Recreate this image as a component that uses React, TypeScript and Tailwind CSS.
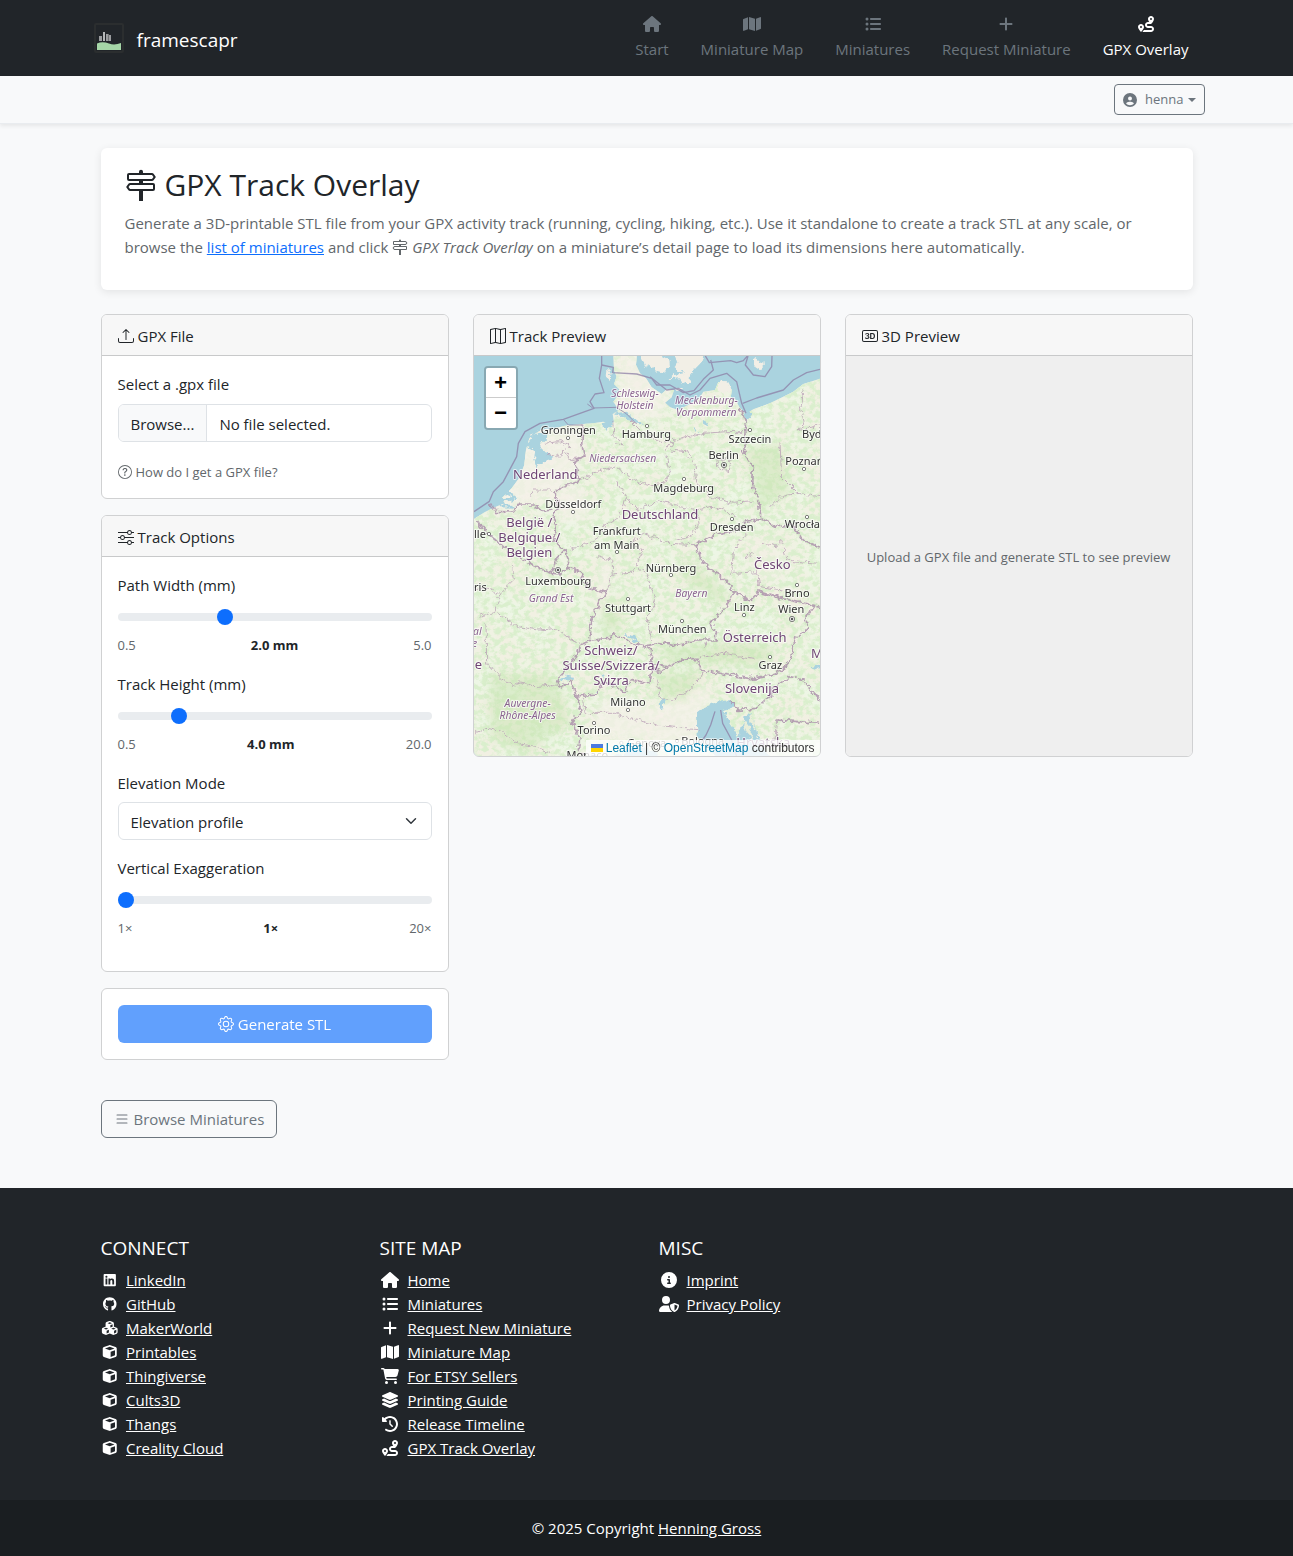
import { useState } from "react";
import type { ReactNode } from "react";
import type { IconType } from "react-icons";
import {
  BsBadge3D,
  BsGear,
  BsList,
  BsMap,
  BsQuestionCircle,
  BsSignpost2,
  BsSliders,
  BsUpload,
} from "react-icons/bs";
import {
  FaCartShopping,
  FaCircleInfo,
  FaCircleUser,
  FaClockRotateLeft,
  FaCube,
  FaCubes,
  FaGithub,
  FaHouse,
  FaLayerGroup,
  FaLinkedin,
  FaListUl,
  FaMap,
  FaPlus,
  FaRoute,
  FaUserShield,
} from "react-icons/fa6";

type LinkItem = { icon: IconType; label: string };

const navItems: LinkItem[] = [
  { icon: FaHouse, label: "Start" },
  { icon: FaMap, label: "Miniature Map" },
  { icon: FaListUl, label: "Miniatures" },
  { icon: FaPlus, label: "Request Miniature" },
  { icon: FaRoute, label: "GPX Overlay" },
];

const connectLinks: LinkItem[] = [
  { icon: FaLinkedin, label: "LinkedIn" },
  { icon: FaGithub, label: "GitHub" },
  { icon: FaCubes, label: "MakerWorld" },
  { icon: FaCube, label: "Printables" },
  { icon: FaCube, label: "Thingiverse" },
  { icon: FaCube, label: "Cults3D" },
  { icon: FaCube, label: "Thangs" },
  { icon: FaCube, label: "Creality Cloud" },
];

const siteLinks: LinkItem[] = [
  { icon: FaHouse, label: "Home" },
  { icon: FaListUl, label: "Miniatures" },
  { icon: FaPlus, label: "Request New Miniature" },
  { icon: FaMap, label: "Miniature Map" },
  { icon: FaCartShopping, label: "For ETSY Sellers" },
  { icon: FaLayerGroup, label: "Printing Guide" },
  { icon: FaClockRotateLeft, label: "Release Timeline" },
  { icon: FaRoute, label: "GPX Track Overlay" },
];

const miscLinks: LinkItem[] = [
  { icon: FaCircleInfo, label: "Imprint" },
  { icon: FaUserShield, label: "Privacy Policy" },
];

function Logo() {
  return (
    <svg viewBox="0 0 30 30" className="size-[30px]" aria-hidden="true">
      <rect x="1" y="1" width="28" height="28" rx="1" fill="#212529" stroke="#2b2e2f" strokeWidth="2" />
      <g fill="#9a9c9e">
        <rect x="5" y="13" width="3" height="5" />
        <rect x="9" y="9" width="2" height="9" fill="#b5b7b8" />
        <rect x="12" y="11" width="2" height="7" />
        <rect x="14" y="11" width="1" height="7" fill="#6d7072" />
        <rect x="15" y="12" width="2" height="6" />
      </g>
      <path d="M3 20.500C7 18.500 11 19 15 20.500s8 1 12-.5V27H3z" fill="#a5d6a7" />
    </svg>
  );
}

function Card({ icon: Icon, title, children }: { icon: IconType; title: string; children: ReactNode }) {
  return (
    <section className="overflow-hidden rounded-md border border-[#d0d1d2] bg-white">
      <h2 className="flex items-center gap-1 border-b border-[#c8c9ca] bg-[#f7f7f7] px-4 pt-[9px] pb-[7px] leading-6">
        <Icon className="size-4" />
        {title}
      </h2>
      {children}
    </section>
  );
}

type SliderProps = {
  id: string;
  label: string;
  min: number;
  max: number;
  step: number;
  initial: number;
  format: (v: number) => string;
  unit?: string;
};

function Slider({ id, label, min, max, step, initial, format, unit = "" }: SliderProps) {
  const [value, setValue] = useState(initial);
  return (
    <div className="mb-4">
      <label htmlFor={id} className="mb-2 block leading-6">
        {label}
      </label>
      <input
        id={id}
        type="range"
        min={min}
        max={max}
        step={step}
        value={value}
        onChange={(e) => setValue(Number(e.target.value))}
        className="block h-6 w-full appearance-none bg-transparent [&::-webkit-slider-runnable-track]:h-2 [&::-webkit-slider-runnable-track]:rounded-full [&::-webkit-slider-runnable-track]:bg-[#e9ecef] [&::-webkit-slider-thumb]:-mt-1 [&::-webkit-slider-thumb]:size-4 [&::-webkit-slider-thumb]:appearance-none [&::-webkit-slider-thumb]:rounded-full [&::-webkit-slider-thumb]:bg-[#0d6efd]"
      />
      <div className="mt-1.5 flex justify-between text-[13px] leading-[21px] text-[#62676b]">
        <span>{format(min)}</span>
        <output htmlFor={id} className="font-bold text-[#212529]">
          {format(value)}
          {unit}
        </output>
        <span>{format(max)}</span>
      </div>
    </div>
  );
}

type Place = { t: string; x: number; y: number; dot?: [number, number]; capital?: boolean };

const cities: Place[] = [
  { t: "Groningen", x: 295, y: 372, dot: [294, 384] },
  { t: "Hamburg", x: 529, y: 385, dot: [531, 348] },
  { t: "Szczecin", x: 840, y: 398, dot: [840, 360] },
  { t: "Berlin", x: 761, y: 446, dot: [762, 465], capital: true },
  { t: "Magdeburg", x: 641, y: 545, dot: [642, 507] },
  { t: "Düsseldorf", x: 310, y: 594, dot: [309, 606] },
  { t: "Dresden", x: 785, y: 663, dot: [786, 627] },
  { t: "Frankfurt", x: 440, y: 674 },
  { t: "am Main", x: 440, y: 716, dot: [441, 726] },
  { t: "Nürnberg", x: 603, y: 785, dot: [603, 795] },
  { t: "Luxembourg", x: 265, y: 824, dot: [264, 780], capital: true },
  { t: "Stuttgart", x: 474, y: 905, dot: [474, 867] },
  { t: "München", x: 637, y: 970, dot: [636, 933] },
  { t: "Linz", x: 823, y: 904, dot: [822, 915] },
  { t: "Brno", x: 981, y: 860, dot: [981, 825] },
  { t: "Wien", x: 964, y: 908, dot: [966, 927], capital: true },
  { t: "Graz", x: 901, y: 1078, dot: [900, 1041] },
  { t: "Milano", x: 474, y: 1188, dot: [474, 1200] },
  { t: "Torino", x: 372, y: 1273, dot: [372, 1239] },
  { t: "Genova", x: 530, y: 1312, dot: [454, 1299] },
  { t: "Bologna", x: 698, y: 1304, dot: [621, 1293] },
  { t: "Monaco", x: 352, y: 1348 },
];

const edgeCities = [
  { t: "Byd", x: 996, y: 384 },
  { t: "Poznań", x: 946, y: 465 },
  { t: "Wrocław", x: 944, y: 655 },
  { t: "lle", x: 12, y: 683 },
  { t: "ris", x: 12, y: 842 },
];

const countries: Place[] = [
  { t: "Nederland", x: 226, y: 508 },
  { t: "Deutschland", x: 570, y: 626 },
  { t: "België /", x: 178, y: 652 },
  { t: "Belgique /", x: 178, y: 697 },
  { t: "Belgien", x: 178, y: 742 },
  { t: "Česko", x: 907, y: 777 },
  { t: "Österreich", x: 854, y: 995 },
  { t: "Schweiz/", x: 423, y: 1036 },
  { t: "Suisse/Svizzera/", x: 423, y: 1080 },
  { t: "Svizra", x: 423, y: 1126 },
  { t: "Slovenija", x: 846, y: 1150 },
  { t: "Hrvatska", x: 880, y: 1312 },
  { t: "Ma", x: 1052, y: 1045 },
  { t: "e", x: 25, y: 1078 },
];

const regions: Place[] = [
  { t: "Schleswig-", x: 495, y: 261 },
  { t: "Holstein", x: 495, y: 297 },
  { t: "Mecklenburg-", x: 709, y: 283 },
  { t: "Vorpommern", x: 709, y: 319 },
  { t: "Niedersachsen", x: 458, y: 457 },
  { t: "Grand Est", x: 243, y: 875 },
  { t: "Bayern", x: 664, y: 861 },
  { t: "Auvergne-", x: 173, y: 1192 },
  { t: "Rhône-Alpes", x: 173, y: 1227 },
  { t: "al", x: 22, y: 975 },
  { t: "e", x: 14, y: 1010 },
];

function TrackMap() {
  return (
    <svg
      viewBox="12 138 1038 1200"
      preserveAspectRatio="xMidYMid slice"
      className="block size-full"
      role="img"
      aria-label="Map of Central Europe"
    >
      <defs>
        <filter id="forest" x="0" y="0" width="100%" height="100%">
          <feTurbulence type="fractalNoise" baseFrequency="0.055 0.065" numOctaves="5" seed="8" />
          <feColorMatrix values="0 0 0 0 0.7  0 0 0 0 0.86  0 0 0 0 0.61  4.2 0 0 0 -1.7" />
        </filter>
        <filter id="fields" x="0" y="0" width="100%" height="100%">
          <feTurbulence type="fractalNoise" baseFrequency="0.012" numOctaves="3" seed="21" />
          <feColorMatrix values="0 0 0 0 0.85  0 0 0 0 0.92  0 0 0 0 0.78  0 3 0 0 -1.1" />
        </filter>
        <filter id="jagged" x="-5%" y="-5%" width="110%" height="110%">
          <feTurbulence type="fractalNoise" baseFrequency="0.06" numOctaves="3" seed="4" />
          <feDisplacementMap in="SourceGraphic" scale="22" xChannelSelector="R" yChannelSelector="G" />
        </filter>
        <filter id="haze" x="-20%" y="-20%" width="140%" height="140%">
          <feGaussianBlur stdDeviation="14" />
        </filter>
        <clipPath id="land">
          <path d="M430 138L432 180 440 200 432 222 448 238 440 262 430 275 446 300 428 312 432 335 418 345 400 335 370 340 330 343 285 347 235 360 200 368 178 385 168 420 163 465 148 503 125 535 95 565 105 580 78 590 45 606 12 627V1345H1060V203L1000 222 970 245 900 280 850 298 828 312 808 292 796 268 782 262 786 240 770 218 745 216 735 240 700 245 690 262 660 282 625 300 600 292 585 278 605 262 612 240 590 238 575 252 545 232 528 205 510 190 498 165 500 138Z" />
        </clipPath>
      </defs>

      <rect x="0" y="130" width="1060" height="1220" fill="#aad3df" />

      <g clipPath="url(#land)">
        <rect x="0" y="130" width="1060" height="1220" fill="#f1f0e2" />
        <rect x="0" y="130" width="1060" height="1220" filter="url(#fields)" />
        <rect x="0" y="130" width="1060" height="1220" filter="url(#forest)" />
        <g fill="#f5f1e9" opacity="0.75" filter="url(#haze)">
          <path d="M440 130H520L600 250 560 330 450 320Z" />
          <path d="M160 370L340 345 335 470 260 550 130 600 60 600Z" />
          <path d="M240 560L330 520 360 620 280 640Z" />
          <path d="M400 1160L560 1190 730 1120 700 1230 690 1340 520 1290 340 1280Z" />
          <path d="M400 740L430 760 400 900 370 980 380 860Z" />
          <path d="M830 680L960 700 930 830 830 790Z" opacity="0.5" />
        </g>
        <g fill="#c5e2ad" opacity="0.45" filter="url(#haze)">
          <path d="M830 420L930 400 960 540 870 600Z" />
          <path d="M400 870L460 880 440 970 390 960Z" />
          <path d="M560 1010L900 1000 900 1060 600 1060Z" />
          <path d="M60 1090L260 1100 300 1240 160 1330 60 1280Z" />
          <path d="M640 740L780 860 740 880 640 800Z" />
          <path d="M560 1090L700 1090 640 1170 570 1160Z" />
        </g>
      </g>

      <g fill="#f2efe6" filter="url(#jagged)">
        <path d="M504 130L560 130 598 150 600 172 585 190 560 182 520 160Z" />
        <path d="M612 130L692 130 700 150 680 172 664 190 662 212 640 226 630 205 598 208 610 196 640 190 614 172 622 158Z" />
        <path d="M852 146L880 156 882 170 870 178 852 166Z" />
        <path d="M750 212L772 214 784 236 776 252 752 246 740 232Z" />
        <path d="M620 232L640 236 634 244 618 242Z" />
        <path d="M412 180l10 4-4 30-8-6zM180 380l14-8 6 6-14 10zM205 362l30-8 4 5-30 9z" />
      </g>

      <g fill="#aad3df" filter="url(#jagged)">
        <path d="M170 398L190 375 225 364 232 378 214 396 215 425 240 432 250 445 225 452 200 472 192 448 196 425 180 418Z" />
        <path d="M398 338L428 330 424 348 412 362 398 350Z" />
        <path d="M428 312L470 308 500 330 520 345 494 338 466 320Z" />
        <path d="M545 168L560 176 552 205 540 190Z" />
        <path d="M820 304L846 310 840 328 826 332Z" />
        <path d="M700 330l14 6-4 10-12-8zM676 354l8 10-6 4z" />
        <path d="M78 566L135 560 132 570 90 578ZM85 582L130 585 134 593 95 592ZM110 540l34 22-4 4-34-18z" />
        <path d="M684 1285L678 1212 700 1195 738 1176 782 1170 792 1192 762 1202 778 1240 800 1275 812 1262 822 1220 840 1210 858 1250 870 1290 900 1345 740 1345 700 1290Z" />
        <path d="M270 1112L290 1098 312 1100 310 1108 288 1108Z" />
        <path d="M462 966L500 985 510 998 488 992ZM566 1182L580 1160 584 1172 574 1200ZM388 1092L404 1090 400 1102ZM378 1145L390 1138 384 1154Z" />
        <path d="M1024 1072L1050 1064 1050 1072 1030 1080ZM300 1345L420 1345 520 1305 580 1345Z" />
      </g>
      <g fill="#e9eed9" filter="url(#jagged)">
        <path d="M818 1235l14 4 18 46-8 4zM838 1215l8 6 14 40-8-4z" />
      </g>

      <g fill="none" stroke="#8d7fa6" strokeWidth="4" strokeLinejoin="round" opacity="0.75">
        <path d="M12 605L58 574 70 545 100 515 140 440 145 400 165 365 210 340 280 328 330 310 372 295 360 275 375 252 402 248 388 205 395 165V138" />
        <path d="M395 165L430 172 428 188 500 192 545 205 560 225 600 225 640 248 672 242 700 208 730 180 722 150" />
        <path d="M540 200L590 240 625 235 660 255 690 240 720 205 770 190 800 215 815 280 828 310" />
        <path d="M706 138L718 158 782 152 800 158 820 152 832 138M834 138L826 165 850 195 885 200 905 170 906 138" />
        <path d="M818 280L860 264 940 240 970 210 1010 188 1050 178" />
        <path d="M352 282L368 294 440 292 470 312 500 342M280 328L295 345 340 345" strokeWidth="3" />
        <path d="M735 1204L722 1245 708 1275 690 1300M752 1200L758 1240 785 1290 800 1340" />
      </g>

      <g fill="none" stroke="#a98da9" strokeWidth="5" strokeLinejoin="round" opacity="0.8" filter="url(#jagged)">
        <path d="M340 346L335 400 342 440 308 455 328 485 322 515 270 535 255 550 268 590 248 620 262 645 250 690 285 722 262 745 245 790 220 780 190 765 150 742 110 720 80 690 40 658 20 630" />
        <path d="M60 578L76 604 130 606 150 582 192 582 215 604 245 600" />
        <path d="M285 722L295 765 275 792 245 790M290 772L330 785 350 832 408 846 388 875 366 925 360 985" />
        <path d="M262 1130L272 1095 318 1042 330 1005 365 990 420 985 432 970 490 1002 540 1010 546 1055 590 1072 570 1085 545 1078 540 1122 480 1108 462 1150 430 1125 400 1118 380 1152 318 1158 305 1110 262 1130" />
        <path d="M318 1158L335 1200 305 1238 330 1282 325 1320 350 1345M540 1010L580 998 625 1006 680 990 735 990 740 965 720 940 768 888 795 845" />
        <path d="M590 1070L640 1048 682 1045 692 1080 760 1092 840 1106 900 1095 940 1080 960 1050 975 985 1012 960 1008 920 1030 890" />
        <path d="M808 292L825 330 830 400 818 430 850 470 848 530 870 590 872 625 825 635 812 660 740 672 678 704 692 745 725 780 760 805 795 845 840 872 868 845 935 865 965 872 1050 890" />
        <path d="M872 625L920 650 965 645 1000 690 1050 712M780 1172L800 1198 860 1195 900 1160 915 1130 960 1100 1000 1110 1050 1170M920 1230L985 1235 1050 1240" />
      </g>
      <g fill="none" stroke="#b79db4" strokeWidth="3" strokeLinejoin="round" opacity="0.75" filter="url(#jagged)">
        <path d="M428 330L432 380 460 405 430 400M480 330L520 370 560 390 610 395 650 380 700 370 770 365 822 365M610 395L585 430 600 480 580 520 540 525 480 505 440 470 400 480 350 500 322 515" />
        <path d="M600 420L650 425 675 460 680 520 720 560 790 580 850 575M440 520L470 560 500 600 560 575 620 585 680 600 740 590M470 560L450 620 400 650 380 690 300 720" />
        <path d="M380 740L425 750 430 795 480 790 500 765 530 790 545 840 560 880 530 920 545 990M430 795L408 846M500 765L520 720 480 700 520 670 600 700 678 704" />
        <path d="M680 600L690 640 660 680 620 690M740 590L800 620M125 770L130 810 90 850 75 905 30 915M80 905L140 950 210 960 260 955 300 985 330 1000M48 935L50 1060 90 1100 130 1130 150 1115 190 1130 240 1125 262 1130" />
        <path d="M12 1270L50 1255 100 1265 140 1300 200 1310 240 1330M430 1210L500 1230 560 1245 640 1255 690 1260M560 1110L570 1160 600 1175 660 1140 700 1090M340 1155L345 1210 430 1210M12 835L55 835 85 850" />
        <path d="M785 800L790 720 830 670M790 790L860 785 870 830 935 840M830 735L850 725 845 740 825 742ZM870 700L920 710 940 690M940 715L950 750 1040 760M680 1045L760 1030 850 1045M700 1010L720 980" />
        <path d="M1000 235L990 290 1005 345 980 360 1050 345M930 400L935 500 985 550 1050 560M905 590L935 560 985 550M920 1230L915 1290 960 1320M740 446L780 448 775 480 745 478ZM185 560L190 540 250 540M220 400L270 395 300 410 260 440 230 432M280 420L300 450 340 440" />
      </g>

      <g
        fontFamily='"Noto Sans", "Open Sans", sans-serif'
        stroke="#ffffff"
        strokeOpacity="0.65"
        strokeWidth="6"
        strokeLinejoin="round"
        paintOrder="stroke"
        textAnchor="middle"
      >
        <g fontSize="31" fontStyle="italic" fill="#8a6390">
          {regions.map((p) => (
            <text key={p.t + p.y} x={p.x} y={p.y}>
              {p.t}
            </text>
          ))}
        </g>
        <g fontSize="39" fill="#6f4574">
          {countries.map((p) => (
            <text key={p.t + p.y} x={p.x} y={p.y}>
              {p.t}
            </text>
          ))}
        </g>
        <g fontSize="33" fill="#333333">
          {cities.map((p) => (
            <text key={p.t} x={p.x} y={p.y}>
              {p.t}
            </text>
          ))}
          {edgeCities.map((p) => (
            <text key={p.t} x={p.x} y={p.y} textAnchor="start">
              {p.t}
            </text>
          ))}
        </g>
      </g>
      <g fill="#ffffff" stroke="#444444" strokeWidth="2">
        {cities.map((p) => p.dot && <circle key={p.t} cx={p.dot[0]} cy={p.dot[1]} r={p.capital ? 8 : 5} />)}
        {cities.map((p) => p.dot && p.capital && <circle key={p.t} cx={p.dot[0]} cy={p.dot[1]} r="3" fill="#444444" />)}
        <circle cx="57" cy="672" r="5" />
        <circle cx="1002" cy="477" r="5" />
        <circle cx="1011" cy="621" r="5" />
      </g>
    </svg>
  );
}

function LinkList({ title, items, small = false }: { title: string; items: LinkItem[]; small?: boolean }) {
  return (
    <nav aria-label={title}>
      <h2 className="mb-2 text-[19px] leading-6">{title}</h2>
      <ul>
        {items.map(({ icon: Icon, label }) => (
          <li key={label} className="flex items-center gap-2 leading-6">
            <span className={small ? "text-sm" : "text-base"}>
              <Icon className="h-[1em] w-[1.25em]" />
            </span>
            <a href="#" className="underline">
              {label}
            </a>
          </li>
        ))}
      </ul>
    </nav>
  );
}

export default function App() {
  return (
    <div className='min-h-screen bg-[#f8f9fa] font-["Segoe_UI","Open_Sans",sans-serif] text-[15px] leading-6 text-[#212529]'>
      <header className="bg-[#212529]">
        <div className="mx-auto flex max-w-[1140px] items-center justify-between px-3">
          <a href="#" className="flex items-center gap-[13px] pl-[5px] text-[19px] text-white">
            <Logo />
            <span className="pt-1">framescapr</span>
          </a>
          <nav aria-label="Main" className="flex">
            {navItems.map(({ icon: Icon, label }) => (
              <a
                key={label}
                href="#"
                className={
                  label === "GPX Overlay"
                    ? "flex flex-col items-center gap-px px-4 pt-3 pb-[15px] text-white"
                    : "flex flex-col items-center gap-px px-4 pt-3 pb-[15px] text-[#6c757d]"
                }
              >
                <span className="flex h-6 items-center text-base">
                  <Icon className="h-[1em] w-[1.25em]" />
                </span>
                {label}
              </a>
            ))}
          </nav>
        </div>
      </header>

      <div className="border-b border-[#e9ecef] shadow-[0_2px_4px_rgba(0,0,0,0.075)]">
        <div className="mx-auto flex max-w-[1140px] justify-end px-3 py-2">
          <button
            type="button"
            className="flex items-center rounded-sm border border-[#6c757d] px-2 py-1 text-[13px] leading-[21px] text-[#6c757d]"
          >
            <FaCircleUser className="mr-2 size-3.5" />
            henna
            <span className="ml-1 border-x-4 border-t-4 border-x-transparent border-t-[#6c757d]" />
          </button>
        </div>
      </div>

      <main className="mx-auto max-w-[1140px] px-6 pt-6 pb-[50px]">
        <section className="mb-6 rounded-md bg-white px-6 py-4 shadow-[0_2px_8px_rgba(0,0,0,0.09)]">
          <h1 className="mb-[5px] flex items-center gap-2 text-[30px] leading-[42px]">
            <BsSignpost2 className="size-8" />
            GPX Track Overlay
          </h1>
          <p className="mb-[15px] text-[#62676b]">
            Generate a 3D-printable STL file from your GPX activity track (running, cycling, hiking, etc.). Use it
            standalone to create a track STL at any scale, or browse the{" "}
            <a href="#" className="text-[#0d6efd] underline">
              list of miniatures
            </a>{" "}
            and click <BsSignpost2 className="inline size-4 align-[-2px]" /> <em>GPX Track Overlay</em> on a
            miniature’s detail page to load its dimensions here automatically.
          </p>
        </section>

        <div className="grid grid-cols-3 items-start gap-6">
          <div className="flex flex-col gap-4">
            <Card icon={BsUpload} title="GPX File">
              <div className="p-4">
                <label htmlFor="gpx" className="mb-2 block">
                  Select a .gpx file
                </label>
                <label
                  htmlFor="gpx"
                  className="mb-4 flex h-[38px] items-stretch overflow-hidden rounded-md border border-[#dee2e6]"
                >
                  <input id="gpx" type="file" accept=".gpx" className="sr-only" />
                  <span className="border-r border-[#dee2e6] bg-[#f8f9fa] px-3 pt-[7px]">Browse...</span>
                  <span className="px-3 pt-[7px]">No file selected.</span>
                </label>
                <a href="#" className="flex h-6 items-center gap-1 pt-1 text-[13px] text-[#62676b]">
                  <BsQuestionCircle className="size-3.5" />
                  How do I get a GPX file?
                </a>
              </div>
            </Card>

            <Card icon={BsSliders} title="Track Options">
              <div className="p-4">
                <Slider
                  id="width"
                  label="Path Width (mm)"
                  min={0.5}
                  max={5}
                  step={0.1}
                  initial={2}
                  format={(v) => v.toFixed(1)}
                  unit=" mm"
                />
                <Slider
                  id="height"
                  label="Track Height (mm)"
                  min={0.5}
                  max={20}
                  step={0.5}
                  initial={4}
                  format={(v) => v.toFixed(1)}
                  unit=" mm"
                />
                <label htmlFor="mode" className="mb-[7px] block">
                  Elevation Mode
                </label>
                <div className="relative mb-4">
                  <select
                    id="mode"
                    className="block h-[38px] w-full appearance-none rounded-md border border-[#dee2e6] bg-white px-3 pt-0.5"
                  >
                    <option>Elevation profile</option>
                    <option>Flat</option>
                  </select>
                  <svg
                    viewBox="0 0 16 16"
                    className="pointer-events-none absolute top-1/2 right-[13px] h-3 w-4 -translate-y-1/2"
                    aria-hidden="true"
                  >
                    <path
                      d="m2 5 6 6 6-6"
                      fill="none"
                      stroke="#343a40"
                      strokeWidth="2"
                      strokeLinecap="round"
                      strokeLinejoin="round"
                    />
                  </svg>
                </div>
                <Slider
                  id="exaggeration"
                  label="Vertical Exaggeration"
                  min={1}
                  max={20}
                  step={1}
                  initial={1}
                  format={(v) => `${v}×`}
                />
              </div>
            </Card>

            <section className="rounded-md border border-[#d0d1d2] bg-white p-4">
              <button
                type="button"
                disabled
                className="flex h-[38px] w-full items-center justify-center gap-1 rounded-md bg-[#0d6efd] text-white opacity-65"
              >
                <BsGear className="size-4" />
                Generate STL
              </button>
            </section>
          </div>

          <Card icon={BsMap} title="Track Preview">
            <div className="relative h-[400px]">
              <TrackMap />
              <div className='absolute top-2.5 left-2.5 overflow-hidden rounded-sm border-2 border-black/20 bg-clip-padding font-["Liberation_Mono",monospace] text-[22px] font-bold text-black'>
                <button
                  type="button"
                  aria-label="Zoom in"
                  className="flex size-[30px] items-center justify-center border-b border-[#cccccc] bg-white pt-1"
                >
                  +
                </button>
                <button
                  type="button"
                  aria-label="Zoom out"
                  className="flex size-[30px] items-center justify-center bg-white pt-1"
                >
                  −
                </button>
              </div>
              <div className='absolute right-0 bottom-0 flex items-center bg-white/80 px-[5px] font-["Liberation_Sans",sans-serif] text-xs leading-4 whitespace-pre text-[#333333]'>
                <svg viewBox="0 0 12 8" className="mr-[3px] h-2 w-3" aria-hidden="true">
                  <path d="M0 0h12v4H0z" fill="#4c7be1" />
                  <path d="M0 4h12v4H0z" fill="#ffd500" />
                </svg>
                <a href="#" className="text-[#0078a8]">
                  Leaflet
                </a>
                <span>{" | © "}</span>
                <a href="#" className="text-[#0078a8]">
                  OpenStreetMap
                </a>
                <span>{" contributors"}</span>
              </div>
            </div>
          </Card>

          <Card icon={BsBadge3D} title="3D Preview">
            <div className="flex h-[400px] items-center justify-center bg-[#efefef] px-2 pt-0.5 text-center text-[13px] text-[#62676b]">
              Upload a GPX file and generate STL to see preview
            </div>
          </Card>
        </div>

        <a
          href="#"
          className="mt-10 inline-flex h-[38px] items-center gap-1 rounded-md border border-[#6c757d] px-3 text-[#6c757d]"
        >
          <BsList className="size-4" />
          Browse Miniatures
        </a>
      </main>

      <footer className="bg-[#212529] text-white">
        <div className="mx-auto grid max-w-[1140px] grid-cols-4 pt-12 pb-10 pl-6">
          <LinkList title="CONNECT" items={connectLinks} small />
          <LinkList title="SITE MAP" items={siteLinks} />
          <LinkList title="MISC" items={miscLinks} />
        </div>
        <div className="bg-[#1a1e21] py-4 text-center">
          © 2025 Copyright{" "}
          <a href="#" className="underline">
            Henning Gross
          </a>
        </div>
      </footer>
    </div>
  );
}
